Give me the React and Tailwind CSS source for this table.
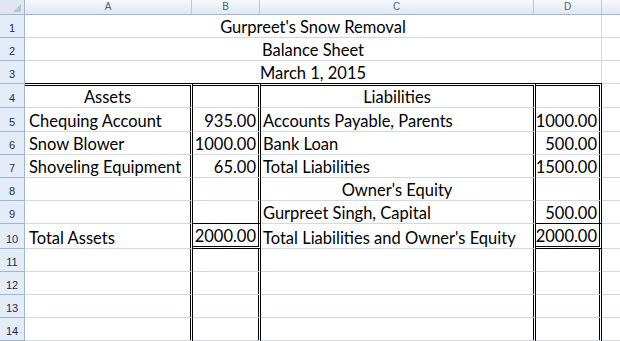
const cols = ['A', 'B', 'C', 'D'];

const body = [
  { n: 4, h: 'h-[25px]', a: 'Assets', c: 'Liabilities', center: true, top: true },
  { n: 5, h: 'h-[24px]', a: 'Chequing Account', b: '935.00', c: 'Accounts Payable, Parents', d: '1000.00' },
  { n: 6, h: 'h-[23px]', a: 'Snow Blower', b: '1000.00', c: 'Bank Loan', d: '500.00' },
  { n: 7, h: 'h-[23px]', a: 'Shoveling Equipment', b: '65.00', c: 'Total Liabilities', d: '1500.00' },
  { n: 8, h: 'h-[23px]', c: "Owner's Equity", center: true },
  { n: 9, h: 'h-[23px]', c: 'Gurpreet Singh, Capital', d: '500.00', boxBelow: true },
  { n: 10, h: 'h-[25px]', a: 'Total Assets', b: '2000.00', c: "Total Liabilities and Owner's Equity", d: '2000.00', box: true },
  { n: 11, h: 'h-[23px]' },
  { n: 12, h: 'h-[23px]' },
  { n: 13, h: 'h-[23px]' },
  { n: 14, h: 'h-[23px]' },
];

const titles = [
  { n: 1, h: 'h-[23px]', text: "Gurpreet's Snow Removal" },
  { n: 2, h: 'h-[23px]', text: 'Balance Sheet' },
  { n: 3, h: 'h-[22px]', text: 'March 1, 2015', last: true },
];

const RowNum = ({ n, cls }) => (
  <div className={`flex items-end justify-center bg-[#e4ecf7] border-r border-r-[#9eb6ce] pb-[3px] font-['Liberation_Sans'] text-[11px] leading-none text-[#1b2f52] ${cls}`}>
    {n}
  </div>
);

const text = 'flex items-end overflow-hidden whitespace-nowrap leading-[20px] text-[16.5px] text-black';

function DataRow({ r }) {
  const edge = r.top ? 'border-t-[3px] border-t-black' : '';
  const plain = `${text} border-double border-r-[3px] border-r-black border-b border-b-[#d0d7e5] ${edge}`;
  const boxed = r.box
    ? 'border-b-[3px] border-b-black'
    : r.boxBelow
      ? 'border-b border-b-black'
      : 'border-b border-b-[#d0d7e5]';
  const num = `${text} border-double border-r-[3px] border-r-black justify-end pr-[2px] ${boxed} ${edge}`;
  return (
    <div className={`grid grid-cols-[25px_168px_68px_275px_66px_1fr] ${r.h}`}>
      <RowNum n={r.n} cls={`border-b border-b-[#9eb6ce] ${r.top ? 'border-t border-t-[#9eb6ce]' : ''}`} />
      <div className={`${plain} ${r.center ? 'justify-center' : 'pl-[4px]'}`}>{r.a}</div>
      <div className={num}>{r.b}</div>
      <div className={`${plain} ${r.center ? 'justify-center' : 'pl-[2px]'}`}>{r.c}</div>
      <div className={num}>{r.d}</div>
      <div className={`border-b border-b-[#d0d7e5] ${r.top ? 'border-t border-t-[#d0d7e5]' : ''}`} />
    </div>
  );
}

export default function App() {
  return (
    <div className="w-[620px] h-[341px] overflow-hidden bg-white font-['Lato',sans-serif]">
      <div className="grid grid-cols-[25px_167px_68px_274px_68px_1fr] h-[15px] border-b border-b-[#9eb6ce] bg-gradient-to-b from-[#f5f8fc] to-[#e0e8f3]">
        <div className="relative border-r border-r-[#9eb6ce] bg-[#dfe6f0]">
          <svg className="absolute right-[3px] bottom-[2px]" width="8" height="8" viewBox="0 0 8 8">
            <polygon points="8,0 8,8 0,8" fill="#b6c6da" />
          </svg>
        </div>
        {cols.map((c) => (
          <div key={c} className="flex items-center justify-center border-r border-r-[#b9c9dc] font-['Liberation_Sans'] text-[10px] leading-none text-[#4c5f7c]">
            {c}
          </div>
        ))}
        <div />
      </div>

      {titles.map((t) => (
        <div key={t.n} className={`grid grid-cols-[25px_577px_1fr] ${t.h}`}>
          <RowNum n={t.n} cls={t.last ? '' : 'border-b border-b-[#9eb6ce]'} />
          <div className={`${text} justify-center border-r border-r-[#d0d7e5] ${t.last ? '' : 'border-b border-b-[#d0d7e5]'}`}>
            {t.text}
          </div>
          <div className={t.last ? '' : 'border-b border-b-[#d0d7e5]'} />
        </div>
      ))}

      {body.map((r) => (
        <DataRow key={r.n} r={r} />
      ))}
    </div>
  );
}
